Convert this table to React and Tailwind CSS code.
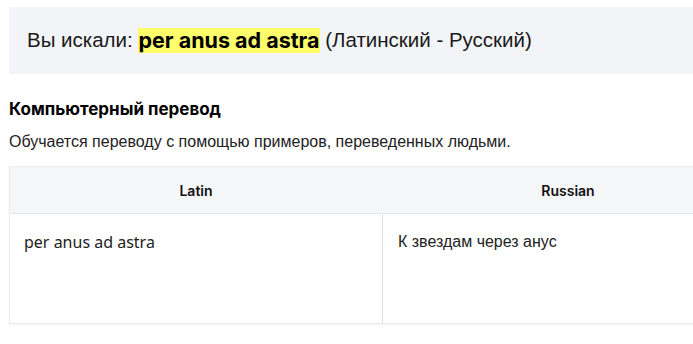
export default function App() {
  return (
    <div className="w-[693px] h-[344px] overflow-hidden bg-white pl-[9px] pt-[7px] font-['Liberation_Sans',Arial,sans-serif] text-[#1a1a1a]">
      <div className="w-[720px] h-[67px] bg-[#f2f4f7] flex items-center pl-[18px] text-[20.5px]">
        <span>Вы искали:&nbsp;</span>
        <span className="bg-[#fdfd6b] font-['Inter',sans-serif] font-bold text-[21.5px] text-black leading-[25px]">per anus ad astra</span>
        <span>&nbsp;(Латинский - Русский)</span>
      </div>

      <h2 className="mt-[24px] font-['Inter',sans-serif] font-bold text-[17px] leading-[22px] text-black">Компьютерный перевод</h2>
      <p className="mt-[12px] text-[16px] leading-[20px] text-[#222]">Обучается переводу с помощью примеров, переведенных людьми.</p>

      <div className="mt-[14px] w-[746px] border border-[#ececec] shadow-[0_1px_2px_rgba(0,0,0,0.06)]">
        <div className="grid grid-cols-2 h-[47px] bg-[#f5f6f8] border-b border-[#e6e7ea] font-['Inter',sans-serif] font-semibold text-[14px] text-[#111]">
          <div className="flex items-center justify-center">Latin</div>
          <div className="flex items-center justify-center">Russian</div>
        </div>
        <div className="grid grid-cols-2 h-[109px] text-[16px]">
          <div className="pl-[14px] pt-[18px] font-['Noto_Sans',sans-serif] text-[#222] leading-[20px]">per anus ad astra</div>
          <div className="border-l border-[#dcdcdc] pl-[15px] pt-[18px] leading-[20px] text-[#222]">К звездам через анус</div>
        </div>
      </div>
    </div>
  );
}
